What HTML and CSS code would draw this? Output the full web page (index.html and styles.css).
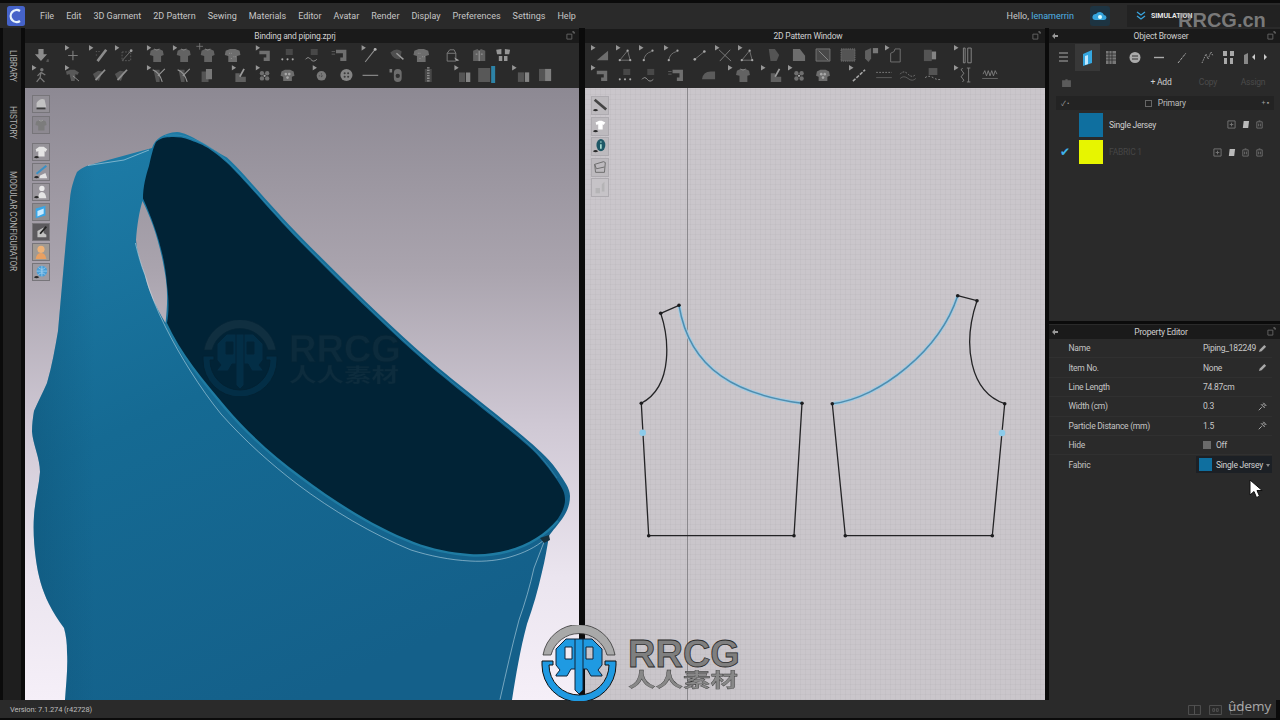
FILE: index.html
```html
<!DOCTYPE html>
<html lang="en">
<head>
<meta charset="utf-8">
<title>CLO 3D - Binding and piping</title>
<link rel="stylesheet" href="styles.css">
</head>
<body>
<svg class="defs" aria-hidden="true">
  <defs>
    <symbol id="fl" viewBox="0 0 20 20"><path d="M0 0l4.500 2.800-4.500 2.800z" fill="#c4c4c4"/></symbol>
    <symbol id="down" viewBox="-1.500 -1.500 23 23"><path d="M7 3h6v6h4l-7 8-7-8h4z" fill="#b5b5b5"/><path d="M17 15l2 0 0 3-3 0z" fill="#666"/></symbol>
    <symbol id="plus" viewBox="-1.500 -1.500 23 23"><path d="M10 5v11M4.500 10.500h11" stroke="#a0a0a0" stroke-width="1.300" fill="none"/></symbol>
    <symbol id="pen" viewBox="-1.500 -1.500 23 23"><path d="M5 17L15 4" stroke="#b5b5b5" stroke-width="3" fill="none"/><path d="M3 6h6M3 10h3" stroke="#777" stroke-dasharray="1.500 1.500"/></symbol>
    <symbol id="boxi" viewBox="-1.500 -1.500 23 23"><path d="M4.500 6.500h10v10h-10z" stroke="#777" stroke-dasharray="2 1.500" fill="none"/><path d="M5 16L15 5" stroke="#999"/><circle cx="15" cy="5" r="1.600" fill="#ccc"/></symbol>
    <symbol id="tee" viewBox="-1.500 -1.500 23 23"><path d="M3 5l4-2h6l4 2 1 5-3 1v7H6v-7L2 10z" fill="#7c7c7c"/><path d="M7 3q3 3 6 0" stroke="#aaa" fill="none"/></symbol>
    <symbol id="teeb" viewBox="-1.500 -1.500 23 23"><path d="M2 5l5-2h6l5 2 1 5-4 1v7H5v-7L1 10z" fill="#8a8a8a"/><path d="M6 8h3M11 12h3M8 14h2" stroke="#ccc" stroke-dasharray="1 1"/></symbol>
    <symbol id="sew" viewBox="-1.500 -1.500 23 23"><path d="M4 5h12v12H9v-4h3V9H4z" fill="#8d8d8d"/></symbol>
    <symbol id="dotsew" viewBox="-1.500 -1.500 23 23"><path d="M8 3h8v7H8z" fill="#555"/><circle cx="4" cy="15" r="1.200" fill="#ddd"/><circle cx="10" cy="15" r="1.200" fill="#ddd"/><circle cx="16" cy="15" r="1.200" fill="#ddd"/></symbol>
    <symbol id="wavesew" viewBox="-1.500 -1.500 23 23"><path d="M8 3h8v7H8z" fill="#555"/><path d="M2 15q3-4 6 0t7 0" stroke="#ccc" fill="none"/></symbol>
    <symbol id="sewp" viewBox="-1.500 -1.500 23 23"><path d="M1 6h4M1 9h4" stroke="#777"/><path d="M6 4h12v13h-7v-4h3V8H6z" fill="#8d8d8d"/></symbol>
    <symbol id="needle" viewBox="-1.500 -1.500 23 23"><path d="M4 18L15 4" stroke="#bbb" stroke-width="1.200"/><circle cx="15.500" cy="3.500" r="1.700" fill="#eee"/></symbol>
    <symbol id="cone" viewBox="-1.500 -1.500 23 23"><path d="M2 7q7-6 13-1l-2 9q-8 0-11-8z" fill="#606060"/><path d="M9 8l8 7" stroke="#ccc" stroke-width="1.600"/></symbol>
    <symbol id="cube" viewBox="-1.500 -1.500 23 23"><path d="M3 8h10v9H3zM3 8l3-4h5l2 4" stroke="#aaa" fill="none"/><path d="M11 13l6 3-3 1z" fill="#ddd"/></symbol>
    <symbol id="vest" viewBox="-1.500 -1.500 23 23"><path d="M3 5l5-2 2 2 2-2 5 2v12H3z" fill="#777"/><path d="M10 5v12M6 9h2M12 9h2" stroke="#ddd"/></symbol>
    <symbol id="gift" viewBox="-1.500 -1.500 23 23"><path d="M2 4l6-1v6H3zM18 4l-6-1v6h5zM5 11h4v6H5zM11 11h4v6h-4z" fill="#c4c4c4"/></symbol>
    <symbol id="walk" viewBox="-1.500 -1.500 23 23"><circle cx="11" cy="4" r="2" fill="#999"/><path d="M10 7L6 11M10 7l5 3M10 7l-1 6-4 5M9 13l5 5" stroke="#999" stroke-width="1.500" fill="none"/></symbol>
    <symbol id="teecut" viewBox="-1.500 -1.500 23 23"><path d="M2 6l5-2h5l5 3-2 3-2-1-1 8H8L6 9 3 10z" fill="#6d6d6d"/><path d="M10 11l7 6" stroke="#ccc"/></symbol>
    <symbol id="pencut" viewBox="-1.500 -1.500 23 23"><path d="M2 9l6-4 5 1-4 11-4-2z" fill="#666"/><path d="M5 16L16 4" stroke="#bbb" stroke-width="2"/></symbol>
    <symbol id="xcut" viewBox="-1.500 -1.500 23 23"><path d="M4 4h7v14H7z" fill="#666"/><path d="M3 4q8 3 11 14M17 3L9 11" stroke="#c5c5c5" stroke-width="1.300" fill="none"/></symbol>
    <symbol id="pages" viewBox="-1.500 -1.500 23 23"><path d="M3 6h8v12H3z" fill="#666"/><path d="M8 3h7v12H8z" fill="#9a9a9a"/></symbol>
    <symbol id="hand" viewBox="-1.500 -1.500 23 23"><path d="M4 8h5v10H4zM9 12h7v6H9z" fill="#777"/><path d="M9 12l5-9" stroke="#ccc" stroke-width="2"/></symbol>
    <symbol id="flower" viewBox="-1.500 -1.500 23 23"><circle cx="7" cy="8" r="2.500" fill="#8d8d8d"/><circle cx="13" cy="8" r="2.500" fill="#8d8d8d"/><circle cx="7" cy="14" r="2.500" fill="#8d8d8d"/><circle cx="13" cy="14" r="2.500" fill="#8d8d8d"/><circle cx="10" cy="11" r="1.300" fill="#ddd"/></symbol>
    <symbol id="flowert" viewBox="-1.500 -1.500 23 23"><path d="M3 6l4-2h6l4 2 1 5-3 1v5H5v-5l-3-1z" fill="#8a8a8a"/><circle cx="8" cy="9" r="1.500" fill="#ddd"/><circle cx="12" cy="9" r="1.500" fill="#ddd"/><circle cx="10" cy="13" r="1.500" fill="#ddd"/></symbol>
    <symbol id="btn" viewBox="-1.500 -1.500 23 23"><circle cx="10" cy="11" r="5.500" fill="#999"/><path d="M7 11h6M10 8v6" stroke="#555" stroke-dasharray="1.500 1.500"/></symbol>
    <symbol id="button" viewBox="-1.500 -1.500 23 23"><circle cx="10" cy="10" r="7" fill="#aaa"/><circle cx="8" cy="8" r="1.200" fill="#444"/><circle cx="12" cy="8" r="1.200" fill="#444"/><circle cx="8" cy="12" r="1.200" fill="#444"/><circle cx="12" cy="12" r="1.200" fill="#444"/></symbol>
    <symbol id="dash" viewBox="-1.500 -1.500 23 23"><path d="M1 10.500h18" stroke="#aaa" stroke-width="1.500"/></symbol>
    <symbol id="pill" viewBox="-1.500 -1.500 23 23"><rect x="6" y="3" width="9" height="15" rx="4.500" fill="#888"/><circle cx="10.500" cy="11" r="2.500" fill="#333"/><path d="M1 3h3v4H1z" fill="#999"/></symbol>
    <symbol id="zipper" viewBox="-1.500 -1.500 23 23"><path d="M6 3h8v15H6z" fill="#555"/><path d="M10 1v18" stroke="#bbb" stroke-width="3" stroke-dasharray="1.500 1.500"/></symbol>
    <symbol id="rect" viewBox="-1.500 -1.500 23 23"><path d="M4 7h7v11H4z" fill="#666"/><path d="M12 7h5v11h-5z" fill="#aaa"/></symbol>
    <symbol id="gradc" viewBox="0 0 20 20"><path d="M1 3h12v14H1z" fill="#6c6c6c"/><path d="M14 1h4v17h-4z" fill="#2fa9dc"/></symbol>
    <symbol id="grad" viewBox="-1.500 -1.500 23 23"><path d="M3 3h7v14H3z" fill="#666"/><path d="M10 3h7v14h-7z" fill="#a3a3a3"/></symbol>
    <symbol id="tri" viewBox="-1.500 -1.500 23 23"><path d="M4 16L17 5v11z" fill="#8a8a8a"/></symbol>
    <symbol id="poly" viewBox="-1.500 -1.500 23 23"><path d="M4 16h12L13 5z" stroke="#999" fill="none"/><circle cx="4" cy="16" r="1.300" fill="#ddd"/><circle cx="16" cy="16" r="1.300" fill="#ddd"/><circle cx="13" cy="5" r="1.300" fill="#ddd"/></symbol>
    <symbol id="curve" viewBox="-1.500 -1.500 23 23"><path d="M4 16q1-8 9-10" stroke="#999" fill="none"/><circle cx="4" cy="16" r="1.300" fill="#ddd"/><circle cx="14" cy="5" r="1.300" fill="#ddd"/></symbol>
    <symbol id="dotline" viewBox="-1.500 -1.500 23 23"><path d="M4 15L15 6" stroke="#999"/><circle cx="4" cy="15" r="1.500" fill="#ddd"/><circle cx="15" cy="6" r="1.500" fill="#ddd"/></symbol>
    <symbol id="xl" viewBox="-1.500 -1.500 23 23"><path d="M3 4l14 13M16 4L4 17" stroke="#aaa" fill="none"/></symbol>
    <symbol id="hex" viewBox="-1.500 -1.500 23 23"><path d="M4 3h7l5 7-3 7H6z" fill="#666"/></symbol>
    <symbol id="fold" viewBox="-1.500 -1.500 23 23"><path d="M3 3h8l6 8v6H3z" fill="#8a8a8a"/></symbol>
    <symbol id="sq" viewBox="-1.500 -1.500 23 23"><path d="M2 3h16v14H2z" fill="#555" stroke="#999"/><path d="M5 5l11 11" stroke="#bbb"/></symbol>
    <symbol id="dotsq" viewBox="-1.500 -1.500 23 23"><path d="M2 3h16v14H2z" fill="#666" stroke="#999" stroke-dasharray="1.500 1"/></symbol>
    <symbol id="seal" viewBox="-1.500 -1.500 23 23"><path d="M2 5l7-3v12l-3 4-4-4z" fill="#777"/><path d="M11 2h6v6h-6z" fill="#999"/></symbol>
    <symbol id="outl" viewBox="-1.500 -1.500 23 23"><path d="M5 8l4-2 1-3h6v15H5z" stroke="#999" fill="none"/></symbol>
    <symbol id="rectg" viewBox="-1.500 -1.500 23 23"><path d="M3 4h9v13H3z" fill="#666"/><path d="M12 6h5v9h-5z" fill="#aaa"/></symbol>
    <symbol id="brak" viewBox="-1.500 -1.500 23 23"><path d="M7 2h2v17H7zM12 2h4v17h-4z" stroke="#bbb" fill="none"/></symbol>
    <symbol id="iron" viewBox="-1.500 -1.500 23 23"><path d="M2 15q1-9 10-9h5v9z" fill="#707070"/></symbol>
    <symbol id="linep" viewBox="-1.500 -1.500 23 23"><path d="M3 17L17 4" stroke="#ddd" stroke-width="1.800" stroke-dasharray="4 1.500"/></symbol>
    <symbol id="dash2" viewBox="-1.500 -1.500 23 23"><path d="M1 7h18" stroke="#aaa" stroke-dasharray="2 1.500"/><path d="M1 13h18" stroke="#777"/></symbol>
    <symbol id="wavel" viewBox="-1.500 -1.500 23 23"><path d="M1 9q4-5 9 0t9 0" stroke="#aaa" stroke-dasharray="2 1.500" fill="none"/><path d="M1 14q4-4 9 0t9 0" stroke="#777" fill="none"/></symbol>
    <symbol id="wdots" viewBox="-1.500 -1.500 23 23"><path d="M5 2h10v8H5z" fill="#666"/><path d="M1 13q4-3 9 0t9 2" stroke="#ccc" stroke-dasharray="2 2" fill="none"/></symbol>
    <symbol id="zz" viewBox="-1.500 -1.500 23 23"><path d="M6 2q-3 2 0 4t0 4 0 4 0 4" stroke="#bbb" fill="none"/><path d="M11 2h4M11 18h4M13 2v16" stroke="#aaa" fill="none"/></symbol>
    <symbol id="wml" viewBox="-1.500 -1.500 23 23"><path d="M2 9l2-4 2 6 2-6 2 6 2-6 2 6 2-6 2 4" stroke="#aaa" fill="none"/><path d="M1 14h18" stroke="#888"/></symbol>
    <symbol id="popout" viewBox="0 0 10 10"><path d="M1 3.500h5.500v5.500H1z" stroke="#666" fill="none"/><path d="M7 1h2v2" stroke="#888" fill="none"/></symbol>
    <symbol id="pencil" viewBox="0 0 10 10"><path d="M1 9l1-3 5-5 2 2-5 5z" fill="#a8a8a8"/></symbol>
    <symbol id="pushpin" viewBox="0 0 12 12"><path d="M1 11l4-4M4 3l5 5M7 1l4 4M6 4l2-2M8 6l2-2" stroke="#aaa" stroke-width="1.300" fill="none"/></symbol>
    <symbol id="rowp" viewBox="0 0 10 10"><path d="M1 1h8v8H1zM5 3v4M3 5h4" stroke="#777" fill="none"/></symbol>
    <symbol id="rowc" viewBox="0 0 10 10"><path d="M3 1h6l-1 8H2z" fill="#b9b9b9"/></symbol>
    <symbol id="rowb" viewBox="0 0 10 10"><path d="M2 2h6v7H2zM4 1h2" stroke="#6f6f6f" fill="none"/><path d="M4 4v3M6 4v3" stroke="#6f6f6f"/></symbol>
    <symbol id="eyeb" viewBox="0 0 18 18"><path d="M1 15q3-3 6 0-3 2-6 0z" fill="#2a2a2a"/></symbol>
    <symbol id="ft-drape" viewBox="0 0 18 18"><path d="M4 13V8q4-6 9-4l2 9z" fill="#c2c2c2"/><path d="M4 13h10v2H4z" fill="#3c3c3c"/></symbol>
    <symbol id="mark" viewBox="0 0 76 76">
      <path d="M2 30A36.500 36.500 0 0 1 74 30H66A29 29 0 0 0 10 30z" fill="#a9a9a9" stroke="#333" stroke-width=".8"/>
      <path d="M1 36H12V40H8A30 30 0 0 0 68 40H64V36H75V40A37 37 0 0 1 1 40z" fill="#1f9ae2" stroke="#111" stroke-width="1"/>
      <path fill-rule="evenodd" d="M15 24L25 14H51L61 24V40L57 45L61 50V51H50L46 44H42V65L38 69L34 65V44H30L26 51H15V50L19 45L15 40ZM24 22H31V34H24ZM45 22H52V34H45Z" fill="#1f9ae2" stroke="#10243a" stroke-width="1"/>
      <path d="M34 14V44M42 14V44" stroke="#10243a" stroke-width="1"/>
    </symbol>
    <path id="bodyshape" d="M88 165.500L152 148C155 139 163 133 177 132C190 133 208 147 227 157.500C245.500 174.600 270.700 206.500 302 238.200C333.300 269.900 377.300 313.800 415 347.500C452.700 381.200 504.200 419.200 528 440.500C541 451.500 552 462 559 473C564 481 570 488 570 496C570 505 567 511 564 516C559 524 552 531 549 536C547 548 545 560 542 572C538 590 533 607 527 624C520 650 516 675 512 700L65 700C66 684 68 668 67 652C67 643 66 635 64 628C58 620 53 612 49 604C42 590 38 575 36 560C34 545 33 530 34 516C35 500 39 486 40 472C40 458 33 445 32 431.500C32 424 33 417 34 411C38 402 43 392 47 383C52 366 55 348 58 331C60 308 62 285 64 263C66 240 68 219 70 198.500C71 188 74 179 77 172C80 169 84 167 88 165.500Z"/>
  </defs>
</svg>

<div class="app">
  <header class="menubar">
    <svg class="applogo" viewBox="0 0 18 20"><rect width="18" height="20" rx="2.500" fill="#4563c9"/><path d="M13 5a6 6 0 1 0 0 10" fill="none" stroke="#e6f2fb" stroke-width="2.300"/></svg>
    <nav class="menu">
      <span>File</span><span>Edit</span><span>3D Garment</span><span>2D Pattern</span><span>Sewing</span><span>Materials</span><span>Editor</span><span>Avatar</span><span>Render</span><span>Display</span><span>Preferences</span><span>Settings</span><span>Help</span>
    </nav>
    <div class="account">
      <span class="hello">Hello, <b>lenamerrin</b></span>
      <span class="cloud"><svg viewBox="0 0 20 20" width="20" height="20"><rect width="20" height="20" rx="3" fill="#1d3442"/><path d="M5 14a3 3 0 0 1 1-6 4.500 4.500 0 0 1 8 1 2.500 2.500 0 0 1 0 5z" fill="#35a4dc"/><circle cx="10" cy="11" r="2" fill="#dff"/></svg></span>
      <span class="sim"><svg viewBox="0 0 10 10" width="10" height="10"><path d="M1 1l4 3 4-3M1 5l4 3 4-3" fill="none" stroke="#3aa5e0" stroke-width="1.300"/></svg>SIMULATION</span>
    </div>
  </header>

  <div class="main">
    <aside class="rail">
      <span class="rail-a">LIBRARY</span>
      <span class="rail-b">HISTORY</span>
      <span class="rail-c">MODULAR CONFIGURATOR</span>
    </aside>

    <section class="pane pane3d">
      <div class="panehead head3d">Binding and piping.zprj<svg class="pop"><use href="#popout"/></svg></div>
      <svg class="tools" viewBox="0 0 555 45">
        <use href="#down" x="6" y="2" width="20" height="20"/>
        <use href="#fl" x="40" y="2" width="20" height="20"/><use href="#plus" x="38" y="2" width="20" height="20"/>
        <use href="#fl" x="64" y="2" width="20" height="20"/><use href="#pen" x="67" y="2" width="20" height="20"/>
        <use href="#fl" x="90" y="2" width="20" height="20"/><use href="#boxi" x="92" y="2" width="20" height="20"/>
        <use href="#fl" x="122" y="2" width="20" height="20"/><use href="#tee" x="122" y="2" width="20" height="20"/>
        <use href="#fl" x="148" y="2" width="20" height="20"/><use href="#tee" x="149" y="2" width="20" height="20"/>
        <use href="#plus" x="168" y="-4" width="14" height="14"/><use href="#tee" x="173" y="2" width="20" height="20"/>
        <use href="#teeb" x="198" y="2" width="20" height="20"/>
        <use href="#fl" x="231" y="2" width="20" height="20"/><use href="#sew" x="230" y="2" width="20" height="20"/>
        <use href="#dotsew" x="253" y="2" width="20" height="20"/><use href="#wavesew" x="278" y="2" width="20" height="20"/>
        <use href="#sewp" x="305" y="2" width="20" height="20"/>
        <use href="#fl" x="337" y="2" width="20" height="20"/><use href="#needle" x="336" y="2" width="20" height="20"/>
        <use href="#cone" x="363" y="2" width="20" height="20"/><use href="#teeb" x="387" y="2" width="20" height="20"/>
        <use href="#cube" x="419" y="2" width="20" height="20"/><use href="#vest" x="445" y="2" width="20" height="20"/><use href="#gift" x="469" y="2" width="20" height="20"/>

        <use href="#fl" x="7" y="22" width="20" height="20"/><use href="#walk" x="6" y="22" width="20" height="20"/>
        <use href="#fl" x="40" y="22" width="20" height="20"/><use href="#teecut" x="38" y="22" width="20" height="20"/>
        <use href="#pencut" x="65" y="22" width="20" height="20"/><use href="#pencut" x="87" y="22" width="20" height="20"/>
        <use href="#fl" x="122" y="22" width="20" height="20"/><use href="#xcut" x="124" y="22" width="20" height="20"/>
        <use href="#xcut" x="149" y="22" width="20" height="20"/><use href="#pages" x="173" y="22" width="20" height="20"/>
        <use href="#fl" x="207" y="22" width="20" height="20"/><use href="#hand" x="206" y="22" width="20" height="20"/>
        <use href="#fl" x="231" y="22" width="20" height="20"/><use href="#flower" x="230" y="22" width="20" height="20"/>
        <use href="#flowert" x="253" y="22" width="20" height="20"/>
        <use href="#fl" x="288" y="22" width="20" height="20"/><use href="#btn" x="287" y="22" width="20" height="20"/>
        <use href="#button" x="312" y="22" width="20" height="20"/><use href="#dash" x="336" y="22" width="20" height="20"/>
        <use href="#pill" x="363" y="22" width="20" height="20"/><use href="#zipper" x="394" y="22" width="20" height="20"/>
        <use href="#fl" x="430" y="22" width="20" height="20"/><use href="#rect" x="430" y="22" width="20" height="20"/>
        <use href="#gradc" x="453" y="22" width="20" height="20"/>
        <use href="#fl" x="488" y="22" width="20" height="20"/><use href="#rect" x="489" y="22" width="20" height="20"/>
        <use href="#grad" x="511" y="22" width="20" height="20"/>
      </svg>
      <div class="view view3d">
        <svg class="canvas" viewBox="25 88 554 612">
          <defs>
            <linearGradient id="bg3d" gradientUnits="userSpaceOnUse" x1="0" y1="88" x2="0" y2="700">
              <stop offset="0" stop-color="#8d8993"/><stop offset=".3" stop-color="#aaa4ae"/><stop offset=".55" stop-color="#cfc8d4"/><stop offset=".8" stop-color="#ebe5ef"/><stop offset="1" stop-color="#f5eff8"/>
            </linearGradient>
            <linearGradient id="cloth" gradientUnits="userSpaceOnUse" x1="60" y1="170" x2="300" y2="700">
              <stop offset="0" stop-color="#1d7ba6"/><stop offset=".45" stop-color="#156a93"/><stop offset="1" stop-color="#14608a"/>
            </linearGradient>
            <linearGradient id="shade" gradientUnits="userSpaceOnUse" x1="30" y1="0" x2="95" y2="0">
              <stop offset="0" stop-color="#0c4c6e" stop-opacity=".4"/><stop offset="1" stop-color="#0c4c6e" stop-opacity="0"/>
            </linearGradient>
          </defs>
          <rect x="25" y="88" width="554" height="612" fill="url(#bg3d)"/>
          <use href="#bodyshape" fill="url(#cloth)"/>
          <use href="#bodyshape" fill="url(#shade)"/>
          <path fill="url(#bg3d)" d="M142.500 201C152 220 161 245 166 280C168 295 167 310 165.500 323C155 305 148 290 145 275C140 262 137 250 136 240C137 226 139 212 142.500 201Z"/>
          <path class="bind" d="M557 520C546 533 528 545 508 550C496 553 483 555 470 554C451 552.500 432 549 414 542C375 527 337 503 301 476C275 457 250 435 226 407C204 381 180 352 167 323"/>
          <path fill="#012336" d="M156 142C159 139 162 138 165.500 137.400C171 137 180 136 190 140C200 144 207 145 226 162C244.500 179 269.700 211 301 242.700C332.300 274.400 376.300 318.300 414 352C451.700 385.700 503.200 423.700 527 445C540 456 550.700 470.800 557 480C563 489 565 493 565 500C565 507 561 514 557 520C546 533 528 545 508 550C496 553 483 555 470 554C451 552.500 432 549 414 542C375 527 337 503 301 476C275 457 250 435 226 407C204 381 180 352 167 323C169 312 169 300 167 285C165 255 155 225 143 198.500C143 187 146 175 149 166C151 157 153 148 156 142Z"/>
          <g class="stitch">
            <path d="M135.400 243C138 254 141 265 145 275C150 293 157 310 165.500 327C180 356 200 388 221 414C245 441 271 464 297 484C333 511 372 534 411 550C430 556 450 560 470 561C485 562 500 560 510 557C524 553 536 547 544 540"/>
            <path d="M544 542L534 568C530 586 525 603 519 620C512 646 506 673 500 699.500"/>
            <path d="M88 165.500L124 160L149 150"/>
          </g>
          <path class="ridge" d="M165 135.500C171 135 180 134 190 138C200 142 207 143 226 160C244.500 177 269.700 209 301 240.700C332.300 272.400 376.300 316.300 414 350C451.700 383.700 503.200 421.700 527 443C540 454 550.700 468.800 557 478"/>
          <path class="corner" d="M540 538l9-3 1 5-6 3z"/>
        </svg>
        <div class="floatbar bar3d-a">
          <span class="ft"><svg><use href="#ft-drape"/></svg></span>
          <span class="ft dim"><svg><use href="#tee"/></svg></span>
        </div>
        <div class="floatbar bar3d-b">
          <span class="ft"><svg viewBox="0 0 18 18"><path d="M3 6l4-3h5l4 3-2 3-1-1v6H6V8L4 9z" fill="#e4e4e4"/><use href="#eyeb"/></svg></span>
          <span class="ft"><svg viewBox="0 0 18 18"><path d="M8 13l6-3 2 6H7z" fill="#e4e4e4"/><path d="M4 11L15 2" stroke="#3a90c4" stroke-width="2.400"/><use href="#eyeb"/></svg></span>
          <span class="ft"><svg viewBox="0 0 18 18"><circle cx="10" cy="5" r="3" fill="#eaeaea"/><path d="M6 16q0-7 4-7t5 7z" fill="#e4e4e4"/><use href="#eyeb"/></svg></span>
          <span class="ft on"><svg viewBox="0 0 18 18"><path d="M3 5l11-3v11L3 16z" fill="#39a6e6"/><path d="M5 8l7-3v6l-7 3z" fill="#c8ebff"/></svg></span>
          <span class="ft dark"><svg viewBox="0 0 18 18"><path d="M5 8l7-4v6l3 2v3H5z" fill="#c2c2c2"/><path d="M8 11l7-8" stroke="#222" stroke-width="2"/></svg></span>
          <span class="ft peach"><svg viewBox="0 0 18 18"><circle cx="9" cy="6" r="4" fill="#eeb277"/><path d="M3 17q1-7 6-7t6 7z" fill="#e8a062"/></svg></span>
          <span class="ft"><svg viewBox="0 0 18 18"><circle cx="10" cy="8" r="6" fill="#4a9ed6"/><path d="M4 8h12M10 2v12M6 4q4 4 8 0M6 12q4-4 8 0" stroke="#cde9fa" stroke-width=".6" fill="none"/><use href="#eyeb"/></svg></span>
        </div>
      </div>
    </section>

    <section class="pane pane2d">
      <div class="panehead head2d">2D Pattern Window<svg class="pop"><use href="#popout"/></svg></div>
      <svg class="tools" viewBox="0 0 460 45">
        <use href="#fl" x="6" y="2" width="20" height="20"/><use href="#tri" x="7" y="2" width="20" height="20"/>
        <use href="#fl" x="31" y="2" width="20" height="20"/><use href="#poly" x="30" y="2" width="20" height="20"/>
        <use href="#fl" x="54" y="2" width="20" height="20"/><use href="#curve" x="54" y="2" width="20" height="20"/>
        <use href="#fl" x="79" y="2" width="20" height="20"/><use href="#curve" x="79" y="2" width="20" height="20"/>
        <use href="#dotline" x="105" y="2" width="20" height="20"/>
        <use href="#fl" x="130" y="2" width="20" height="20"/><use href="#xl" x="130" y="2" width="20" height="20"/>
        <use href="#fl" x="153" y="2" width="20" height="20"/><use href="#poly" x="152" y="2" width="20" height="20"/>
        <use href="#hex" x="179" y="2" width="20" height="20"/><use href="#fold" x="204" y="2" width="20" height="20"/>
        <use href="#sq" x="228" y="2" width="20" height="20"/><use href="#dotsq" x="253" y="2" width="20" height="20"/>
        <use href="#seal" x="277" y="2" width="20" height="20"/>
        <use href="#fl" x="300" y="2" width="20" height="20"/><use href="#outl" x="300" y="2" width="20" height="20"/>
        <use href="#rectg" x="335" y="2" width="20" height="20"/>
        <use href="#fl" x="369" y="2" width="20" height="20"/><use href="#brak" x="371" y="2" width="20" height="20"/>

        <use href="#fl" x="6" y="22" width="20" height="20"/><use href="#sew" x="7" y="22" width="20" height="20"/>
        <use href="#dotsew" x="30" y="22" width="20" height="20"/><use href="#wavesew" x="54" y="22" width="20" height="20"/>
        <use href="#sewp" x="81" y="22" width="20" height="20"/><use href="#iron" x="114" y="22" width="20" height="20"/>
        <use href="#fl" x="143" y="22" width="20" height="20"/><use href="#tee" x="148" y="22" width="20" height="20"/>
        <use href="#fl" x="176" y="22" width="20" height="20"/><use href="#hand" x="181" y="22" width="20" height="20"/>
        <use href="#fl" x="203" y="22" width="20" height="20"/><use href="#flower" x="204" y="22" width="20" height="20"/>
        <use href="#flowert" x="228" y="22" width="20" height="20"/>
        <use href="#fl" x="264" y="22" width="20" height="20"/><use href="#linep" x="264" y="22" width="20" height="20"/>
        <use href="#dash2" x="289" y="22" width="20" height="20"/><use href="#wavel" x="313" y="22" width="20" height="20"/>
        <use href="#wdots" x="338" y="22" width="20" height="20"/>
        <use href="#fl" x="369" y="22" width="20" height="20"/><use href="#zz" x="371" y="22" width="20" height="20"/>
        <use href="#wml" x="395" y="22" width="20" height="20"/>
      </svg>
      <div class="view view2d">
        <svg class="canvas" viewBox="585 88 460 612">
          <path class="guide" d="M687.500 88V700"/>
          <path class="halo" d="M679 305.300C690 372 740 395 802 403.300"/>
          <path class="halo" d="M832.300 403.700C880 398 940 350 957.700 295.700"/>
          <path class="line" d="M679 305.300L660.700 313.300C668 335 675 385 641.300 403.300L648.700 535.700H794L802 403.300"/>
          <path class="line" d="M832.300 403.700L845.300 535.700H992.300L1004.700 403.700C970 392 962 345 977 300.700L957.700 295.700"/>
          <path class="blue" d="M679 305.300C690 372 740 395 802 403.300"/>
          <path class="blue" d="M832.300 403.700C880 398 940 350 957.700 295.700"/>
          <g class="pts">
            <circle cx="660.700" cy="313.300" r="1.800"/><circle cx="679" cy="305.300" r="1.800"/><circle cx="802" cy="403.300" r="1.800"/><circle cx="794" cy="535.700" r="1.800"/><circle cx="648.700" cy="535.700" r="1.800"/><circle cx="641.300" cy="403.300" r="1.800"/>
            <circle cx="832.300" cy="403.700" r="1.800"/><circle cx="957.700" cy="295.700" r="1.800"/><circle cx="977" cy="300.700" r="1.800"/><circle cx="1004.700" cy="403.700" r="1.800"/><circle cx="992.300" cy="535.700" r="1.800"/><circle cx="845.300" cy="535.700" r="1.800"/>
          </g>
          <circle class="sel" cx="642.700" cy="432.700" r="3.300"/><circle class="sel" cx="1002" cy="433" r="3.300"/>
        </svg>
        <div class="floatbar bar2d">
          <span class="ft"><svg viewBox="0 0 18 18"><path d="M3 3l13 11" stroke="#444" stroke-width="3"/><use href="#eyeb"/></svg></span>
          <span class="ft"><svg viewBox="0 0 18 18"><path d="M4 5l4-2h3l4 2-2 3-1-1v6H7V7L5 8z" fill="#fff"/><use href="#eyeb"/></svg></span>
          <span class="ft"><svg viewBox="0 0 18 18"><ellipse cx="10" cy="8" rx="5" ry="7" fill="#1e5866"/><path d="M10 4v1M10 7v5" stroke="#cfe" stroke-width="1.500"/><use href="#eyeb"/></svg></span>
          <span class="ft"><svg viewBox="0 0 18 18"><path d="M3 6l10-3 2 1-1 11-10 0zM3 6l2 5 9-2" fill="none" stroke="#666"/></svg></span>
          <span class="ft faint"><svg viewBox="0 0 18 18"><path d="M4 10h5v6H4zM11 6l3-3v11h-3z" fill="#aaa" opacity=".6"/></svg></span>
        </div>
      </div>
    </section>

    <section class="side">
      <div class="browser">
        <div class="panehead side-head"><svg class="pin" viewBox="0 0 8 8"><path d="M1 4l3-3v2h3v2H4v2z" fill="#999"/></svg>Object Browser<svg class="pop"><use href="#popout"/></svg></div>
        <svg class="tabs" viewBox="0 0 231 28">
          <rect x="26" y="1" width="25" height="27" fill="#383838"/>
          <path d="M10 10h9M10 14h9M10 18h9" stroke="#aaa"/>
          <path d="M34 11l9-4v13l-9 3z" fill="#35a7e0"/><path d="M36 13l3-1v9l-3 1z" fill="#bfe8ff"/>
          <rect x="57" y="8" width="10" height="13" fill="#777"/><path d="M57 11h10M57 14h10M57 17h10M60 8v13M63 8v13" stroke="#2b2b2b" stroke-width=".8"/>
          <circle cx="86" cy="14.500" r="5.500" fill="#aaa"/><path d="M83 13h6M83 16h6" stroke="#333"/>
          <path d="M105 14.500h10" stroke="#aaa" stroke-width="1.400"/>
          <path d="M129 20l8-10" stroke="#aaa" stroke-dasharray="3 1"/>
          <path d="M153 20l4-9 2 5 3-7 2 4" stroke="#999" fill="none" stroke-dasharray="1.500 1"/>
          <path d="M174 8h4v5h-4zM181 8h4v5h-4zM175 15h3v6h-3zM181 15h3v6h-3z" fill="#a9a9a9"/>
          <path d="M195 12l4-2v11h-4z" fill="#888"/>
          <path d="M206 11l-3 3 3 3zM215 11l3 3-3 3z" fill="#ccc"/>
        </svg>
        <div class="actions">
          <svg class="folder" viewBox="0 0 10 10"><path d="M1 3h3V2h2v1h3v6H1z" fill="#5b5b5b"/></svg>
          <span class="act add">+ Add</span>
          <span class="act off copy">Copy</span>
          <span class="act off assign">Assign</span>
        </div>
        <div class="primary">
          <span class="prim-l">✓ •</span>
          <span class="prim-t"><i class="cb"></i>Primary</span>
          <span class="prim-r">+ ▪</span>
        </div>
        <div class="fabric">
          <span class="check"></span><i class="swatch blue"></i><span class="fname">Single Jersey</span>
          <span class="ficons"><svg><use href="#rowp"/></svg><svg><use href="#rowc"/></svg><svg><use href="#rowb"/></svg></span>
        </div>
        <div class="fabric">
          <span class="check">✔</span><i class="swatch yellow"></i><span class="fname muted">FABRIC 1</span>
          <span class="ficons"><svg><use href="#rowp"/></svg><svg><use href="#rowc"/></svg><svg><use href="#rowb"/></svg><svg><use href="#rowb"/></svg></span>
        </div>
      </div>
      <div class="props">
        <div class="panehead side-head"><svg class="pin" viewBox="0 0 8 8"><path d="M1 4l3-3v2h3v2H4v2z" fill="#999"/></svg>Property Editor<svg class="pop"><use href="#popout"/></svg></div>
        <div class="prow"><span>Name</span><span class="val">Piping_182249</span><svg class="pi"><use href="#pencil"/></svg></div>
        <div class="prow"><span>Item No.</span><span class="val">None</span><svg class="pi"><use href="#pencil"/></svg></div>
        <div class="prow"><span>Line Length</span><span class="val">74.87cm</span></div>
        <div class="prow"><span>Width (cm)</span><span class="val">0.3</span><svg class="pi"><use href="#pushpin"/></svg></div>
        <div class="prow"><span>Particle Distance (mm)</span><span class="val">1.5</span><svg class="pi"><use href="#pushpin"/></svg></div>
        <div class="prow"><span>Hide</span><span class="val"><i class="box"></i>Off</span></div>
        <div class="prow noline"><span>Fabric</span><span class="drop"><i class="dswatch"></i><span class="dname">Single Jersey</span><i class="caret"></i></span></div>
      </div>
    </section>
  </div>

  <footer class="status">
    <span>Version: 7.1.274 (r42728)</span>
    <span class="modes">
      <svg viewBox="0 0 14 11"><path d="M.5.500h13v10H.500zM7 .5v10" stroke="#555" fill="none"/></svg>
      <svg viewBox="0 0 14 11"><path d="M.5.500h13v10H.500z" stroke="#555" fill="none"/><path d="M4 4h2v3H4zM8 4h2v3H8z" stroke="#555" fill="none"/></svg>
      <svg viewBox="0 0 14 11"><path d="M.5.500h13v10H.500z" stroke="#555" fill="none"/></svg>
    </span>
  </footer>

  <span class="udemy">ûdemy</span>
  <span class="site">RRCG.cn</span>

  <div class="logo logo-faint">
    <svg class="ring" viewBox="0 0 76 76"><use href="#mark"/></svg>
    <div class="logo-words"><span class="en">RRCG</span><span class="cn">人人素材</span></div>
  </div>
  <div class="logo logo-main">
    <svg class="ring" viewBox="0 0 76 76"><use href="#mark"/></svg>
    <div class="logo-words"><span class="en">RRCG</span><span class="cn">人人素材</span></div>
  </div>

  <svg class="cursor" viewBox="0 0 14 20"><path d="M1 1v15l4-3.500 2.500 6 3-1.300-2.500-5.700h5.200z" fill="#fff" stroke="#111" stroke-width="1"/></svg>
</div>
</body>
</html>
```

FILE: styles.css
```css
* { box-sizing: border-box; }
html, body { margin: 0; padding: 0; }
body {
  width: 1280px;
  height: 720px;
  overflow: hidden;
  background: #0b0b0b;
  font-family: Roboto, "Liberation Sans", "Noto Sans CJK SC", sans-serif;
  font-size: 9px;
  color: #c8c8c8;
}
.defs { position: absolute; width: 0; height: 0; }

.app {
  position: relative;
  display: flex;
  flex-direction: column;
  width: 1280px;
  height: 720px;
  padding: 3px 0 2px;
}

/* menu */
.menubar {
  display: flex;
  align-items: center;
  height: 25px;
  flex: none;
  background: #2a2a2a;
  padding: 0 0 0 7px;
}
.applogo { width: 18px; height: 20px; flex: none; }
.menu { display: flex; gap: 12px; margin-left: 15px; font-size: 9px; color: #c6c6c6; }
.account { display: flex; align-items: center; margin-left: auto; }
.hello { color: #c8c8c8; font-size: 9px; }
.hello b { font-weight: 400; color: #4fb2e4; }
.cloud { display: flex; margin-left: 16px; }
.sim {
  display: flex;
  align-items: center;
  gap: 5px;
  width: 153px;
  height: 22px;
  margin-left: 17px;
  padding-left: 9px;
  background: #222;
  font-size: 7px;
  font-weight: 700;
  color: #e8e8e8;
}

/* layout */
.main { display: flex; flex: 1; min-height: 0; background: #0b0b0b; }
.rail {
  position: relative;
  flex: none;
  width: 25px;
  background: linear-gradient(90deg, #0b0b0b 0 3px, #1e1e1e 3px 21px, #0b0b0b 21px);
  font-size: 8.200px;
  color: #b0b0b0;
}
.rail span {
  position: absolute;
  left: 7px;
  writing-mode: vertical-rl;
  white-space: nowrap;
  line-height: 12px;
}
.rail-a { top: 22px; }
.rail-b { top: 78px; }
.rail-c { top: 143px; }

.pane { display: flex; flex-direction: column; flex: none; background: #2a2a2a; }
.pane3d { width: 554px; margin-right: 6px; }
.pane2d { width: 460px; margin-right: 4px; }

.panehead {
  position: relative;
  display: flex;
  align-items: center;
  justify-content: center;
  height: 14px;
  margin-top: 1px;
  flex: none;
  background: #1a1a1a;
  font-size: 8.500px;
  letter-spacing: -.2px;
  color: #cfcfcf;
}
.head3d, .head2d { padding-right: 14px; }
.side-head { padding-right: 7px; }
.pop { position: absolute; right: 4px; top: 2px; width: 9px; height: 9px; }
.pin { position: absolute; left: 2px; top: 3px; width: 8px; height: 8px; }
.tools { display: block; width: 100%; height: 45px; flex: none; filter: blur(.45px); opacity: .7; }

.view { position: relative; flex: 1; min-height: 0; overflow: hidden; }
.view2d {
  background-color: #cac6cb;
  background-image:
    repeating-linear-gradient(90deg, rgba(90,90,90,.045) 0 1px, transparent 1px 5px),
    repeating-linear-gradient(0deg, rgba(90,90,90,.045) 0 1px, transparent 1px 5px);
}
.canvas { display: block; width: 100%; height: 100%; }

/* 3D drawing */
.stitch path { fill: none; stroke: #cfe6f0; stroke-width: .7; opacity: .75; }
.ridge { fill: none; stroke: #3f93b6; stroke-width: 1; opacity: .5; }
.bind { fill: none; stroke: #1f7ba2; stroke-width: 5; }
.corner { fill: #16303c; }

/* 2D drawing */
.guide { stroke: #8b898d; stroke-width: 1; fill: none; }
.line { stroke: #232325; stroke-width: 1.300; fill: none; }
.halo { stroke: #9fcbe3; stroke-width: 3.500; fill: none; }
.blue { stroke: #4f8cae; stroke-width: 1.500; fill: none; }
.pts circle { fill: #1c1c1e; }
.sel { fill: #8ccbea; }

/* floating tool strips */
.floatbar { position: absolute; display: flex; flex-direction: column; gap: 2px; }
.bar3d-a { left: 7px; top: 7px; gap: 3px; }
.bar3d-b { left: 7px; top: 55px; }
.bar2d { left: 6px; top: 8px; gap: 1.500px; }
.ft {
  display: flex;
  width: 18px;
  height: 18px;
  background: rgba(150,148,152,.55);
  border: 1px solid #77757a;
  padding: 0;
}
.ft svg { width: 16px; height: 16px; }
.ft.dim { background: rgba(130,128,132,.4); }
.ft.dark { background: #5c5a5e; }
.ft.on { background: #8e8d90; }
.ft.peach { background: #a09a94; }
.bar2d .ft { background: #bdbabe; border-color: #aeabb0; height: 19px; }
.bar2d .ft.faint { background: #c6c3c7; }

/* right column */
.side { display: flex; flex-direction: column; flex: none; width: 231px; background: #0b0b0b; }
.browser { display: flex; flex-direction: column; height: 293px; background: #2a2a2a; flex: none; }
.tabs { display: block; width: 231px; height: 28px; flex: none; filter: blur(.3px); }
.actions { display: flex; align-items: center; height: 22px; flex: none; padding: 0 4px 0 12px; font-size: 8.500px; letter-spacing: -.2px; }
.folder { width: 11px; height: 11px; margin-right: 76px; flex: none; }
.act { height: 20px; line-height: 20px; text-align: center; }
.act.add { color: #d0d0d0; width: 26px; }
.act.off { color: #4a4a4a; }
.copy { margin-left: 24px; width: 20px; }
.assign { margin-left: 22px; width: 26px; }
.primary {
  display: flex;
  align-items: center;
  justify-content: space-between;
  height: 14px;
  margin: 3px 6px 1px 7px;
  padding: 0 5px;
  background: #232323;
  font-size: 8.500px;
  letter-spacing: -.2px;
  flex: none;
}
.prim-l, .prim-r { color: #9a9a9a; font-size: 7px; }
.prim-t { display: flex; align-items: center; gap: 6px; color: #bcbcbc; }
.cb { width: 7px; height: 7px; border: 1px solid #666; }
.fabric { display: flex; align-items: center; height: 27.500px; flex: none; padding-right: 16px; }
.check { width: 30px; padding-left: 11px; font-size: 12px; color: #3fb3ea; }
.swatch { width: 24px; height: 24px; flex: none; }
.swatch.blue { background: #0f6f9f; }
.swatch.yellow { background: #e7f500; }
.fname { margin-left: 6px; font-size: 8.500px; letter-spacing: -.25px; color: #cfcfcf; }
.fname.muted { color: #464646; }
.ficons { display: flex; gap: 5px; margin-left: auto; }
.ficons svg { width: 9px; height: 9px; }

.props { flex: 1; margin-top: 3px; background: #2a2a2a; min-height: 0; }
.prow {
  display: flex;
  align-items: center;
  height: 19.400px;
  margin-right: 8px;
  padding-left: 19.500px;
  border-bottom: 1px solid #303030;
  font-size: 8.500px;
  letter-spacing: -.25px;
  color: #c4c4c4;
  position: relative;
}
.prow.noline { border-bottom: 0; }
.val { position: absolute; left: 154px; display: flex; align-items: center; color: #c8c8c8; }
.pi { position: absolute; left: 209px; width: 9px; height: 9px; }
.box { width: 8px; height: 8px; margin-right: 5px; background: #6a6a6a; }
.drop {
  position: absolute;
  left: 147px;
  top: 1px;
  display: flex;
  align-items: center;
  width: 76px;
  height: 17px;
  background: #1c2025;
  padding-left: 3px;
  color: #d0d0d0;
}
.dswatch { width: 13px; height: 13px; background: #0f6f9f; flex: none; }
.dname { margin-left: 4px; white-space: nowrap; flex: none; }
.caret { margin-left: 3px; border: 2.500px solid transparent; border-top: 3.500px solid #888; margin-top: 3px; flex: none; }

/* status */
.status {
  display: flex;
  align-items: center;
  justify-content: space-between;
  height: 18px;
  flex: none;
  margin-right: 4px;
  padding: 1px 33px 0 10px;
  background: #2a2a2a;
  font-size: 7.500px;
  letter-spacing: -.1px;
  color: #bdbdbd;
}
.modes { display: flex; gap: 8px; }
.modes svg { width: 13px; height: 10px; }

/* overlays */
.udemy {
  position: absolute;
  left: 1228px;
  top: 697px;
  font-family: "Open Sans", sans-serif;
  font-size: 13.500px;
  line-height: 18px;
  color: rgba(225,225,225,.7);
}
.site {
  position: absolute;
  left: 1178px;
  top: 8px;
  font-family: "Liberation Sans", sans-serif;
  font-weight: 700;
  font-size: 20px;
  line-height: 24px;
  color: rgba(150,150,150,.75);
}
.logo { position: absolute; display: flex; gap: 11px; }
.logo .ring { width: 76px; height: 76px; flex: none; }
.logo-words { display: flex; flex-direction: column; align-items: flex-start; margin-top: 14px; }
.en {
  font-family: "Liberation Sans", sans-serif;
  font-weight: 700;
  font-size: 38px;
  line-height: 30px;
  color: #7f7f7f;
  -webkit-text-stroke: .8px #2b2b2b;
}
.cn {
  font-family: "Noto Sans CJK SC", sans-serif;
  font-weight: 700;
  font-size: 27.500px;
  line-height: 26px;
  color: #888;
  -webkit-text-stroke: .5px #333;
  transform: scaleY(.72);
  transform-origin: 0 0;
}
.logo-main { left: 541px; top: 625px; }
.logo-faint { left: 202px; top: 320px; opacity: .09; }
.cursor { position: absolute; left: 1249px; top: 479px; width: 14px; height: 20px; }
```
